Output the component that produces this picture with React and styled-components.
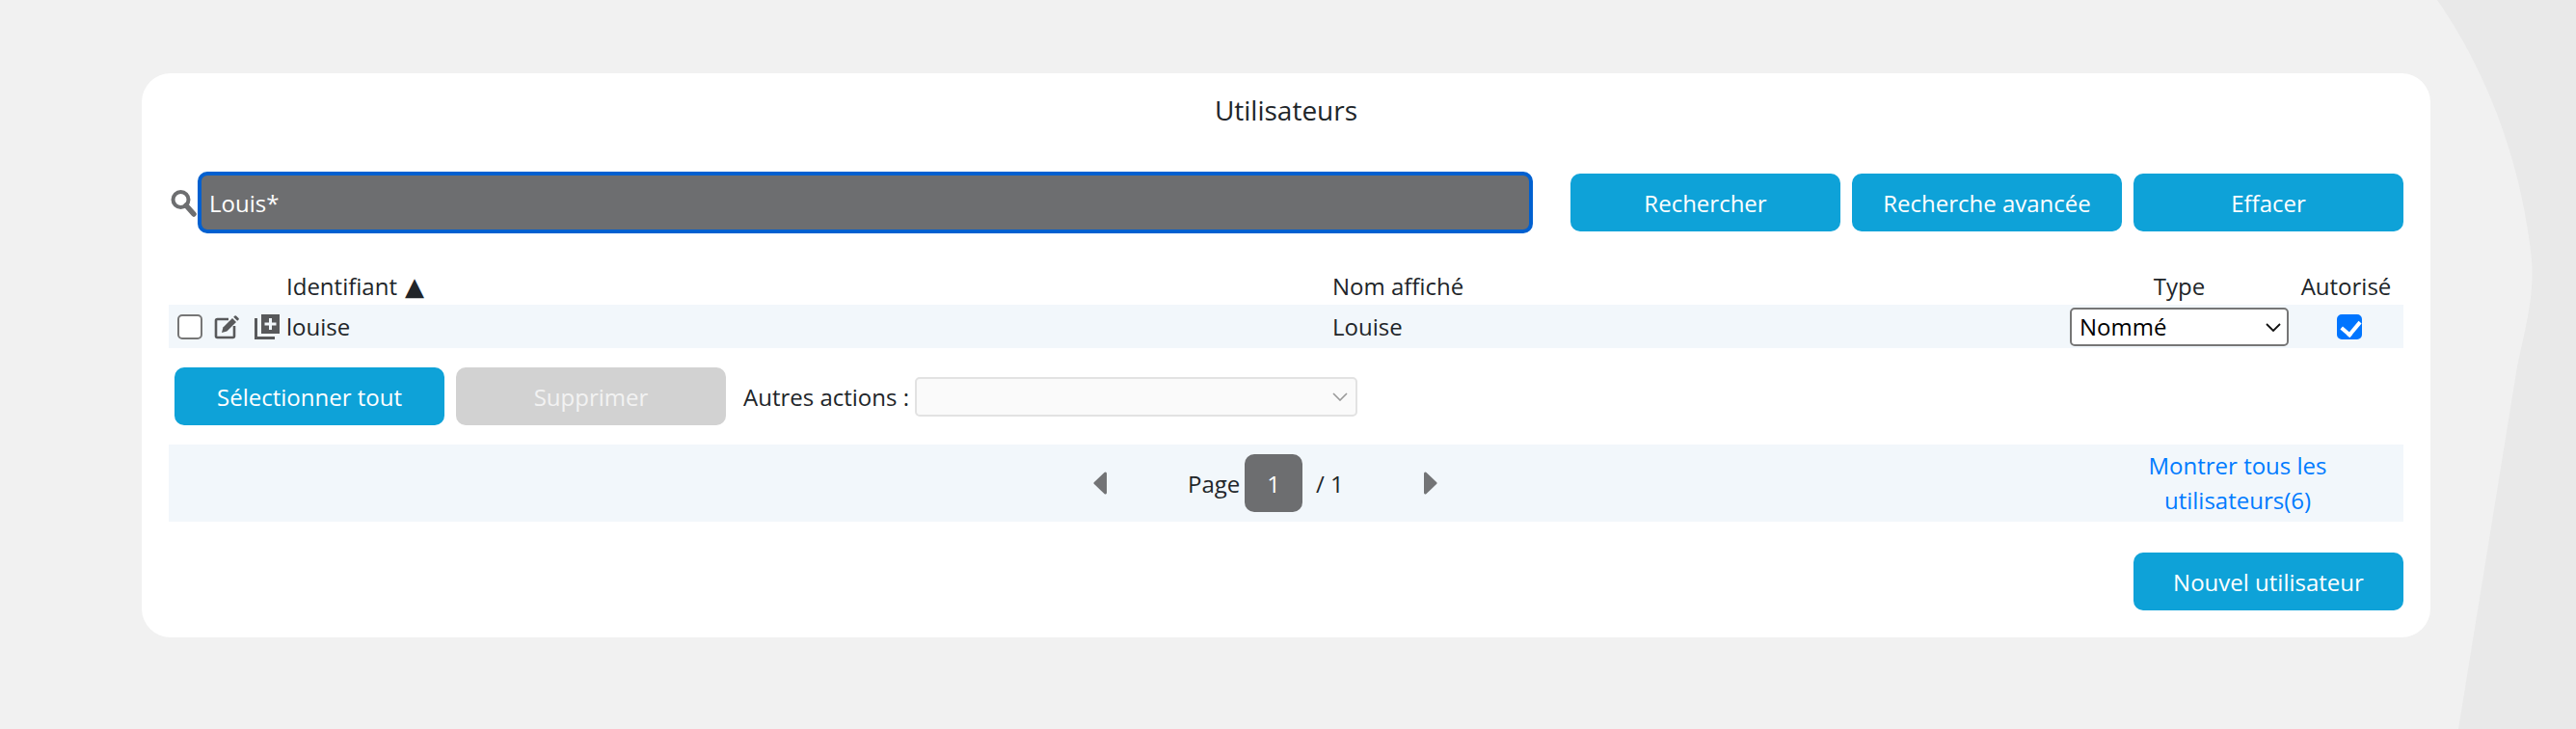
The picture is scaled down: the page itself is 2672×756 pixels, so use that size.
import React from 'react';
import styled, { createGlobalStyle } from 'styled-components';

const GlobalStyle = createGlobalStyle`
  html, body {
    margin: 0;
    padding: 0;
    background: #f1f1f1;
  }
  * {
    box-sizing: border-box;
  }
  body {
    font-family: "Open Sans", "Noto Sans", sans-serif;
    font-size: 24px;
    color: #212529;
  }
`;

const Page = styled.div`
  position: relative;
  width: 2672px;
  height: 756px;
  overflow: hidden;
  padding: 76px 0 0 147px;
  background: #f1f1f1;
`;

const Backdrop = styled.svg`
  position: absolute;
  top: 0;
  left: 0;
`;

const Card = styled.main`
  position: relative;
  width: 2374px;
  height: 585px;
  padding: 0 28px;
  background: #fff;
  border-radius: 30px;
`;

const Title = styled.h1`
  margin: 0 0 26px;
  font-size: 28px;
  font-weight: 400;
  line-height: 76px;
  text-align: center;
`;

const SearchRow = styled.form`
  display: flex;
  align-items: center;
  height: 64px;
  margin: 0;
`;

const SearchIcon = styled.svg`
  flex: none;
  width: 30px;
  height: 30px;
  filter: blur(0.5px);
`;

const SearchInput = styled.input`
  flex: none;
  width: 1385px;
  height: 64px;
  padding: 0 8px;
  border: 4px solid #0060d0;
  border-radius: 10px;
  outline: none;
  background: #6d6e70;
  color: #fff;
  font: inherit;
`;

const SearchButtons = styled.div`
  display: flex;
  gap: 12px;
  margin-left: 39px;
`;

const Button = styled.button`
  flex: none;
  width: 280px;
  height: 60px;
  padding: 0;
  border: 0;
  border-radius: 10px;
  background: ${(p) => (p.disabled ? '#d2d2d2' : '#0ea2d8')};
  color: ${(p) => (p.disabled ? '#f2f2f2' : '#fff')};
  font: inherit;
  font-weight: 500;
`;

const Columns = styled.div`
  display: grid;
  grid-template-columns: 122px 1085px 765px 227px 119px;
  align-items: center;
`;

const HeaderRow = styled(Columns)`
  height: 36px;
  margin: 36px 0 2px;
`;

const HeaderCell = styled.div`
  grid-column: ${(p) => p.$col};
  text-align: ${(p) => (p.$center ? 'center' : 'left')};
  white-space: nowrap;
`;

const SortMark = styled.span`
  margin-left: 8px;
  font-family: "DejaVu Sans", sans-serif;
  font-size: 26px;
  line-height: 1;
`;

const DataRow = styled(Columns)`
  height: 45px;
  background: #f2f7fb;
`;

const RowTools = styled.div`
  display: flex;
  align-items: center;
  padding-left: 9px;
`;

const Check = styled.input`
  appearance: none;
  position: relative;
  flex: none;
  width: 26px;
  height: 26px;
  margin: 0;
  border: 2px solid #767676;
  border-radius: 5px;
  background: #fff;

  &:checked {
    border-color: #0075ff;
    background: #0075ff;
  }

  &:checked::after {
    content: '';
    position: absolute;
    top: 1px;
    left: 6px;
    width: 9px;
    height: 15px;
    border: solid #fff;
    border-width: 0 4px 4px 0;
    transform: rotate(40deg);
  }
`;

const EditIcon = styled.svg`
  flex: none;
  width: 26px;
  height: 26px;
  margin-left: 12px;
`;

const AddIcon = styled.svg`
  flex: none;
  width: 26px;
  height: 26px;
  margin-left: 16px;
`;

const Centered = styled.div`
  display: flex;
  justify-content: center;
  padding-left: 6px;
`;

const SelectWrap = styled.div`
  position: relative;
  width: ${(p) => p.$width}px;
  height: ${(p) => p.$height}px;
`;

const Select = styled.select`
  appearance: none;
  display: block;
  width: 100%;
  height: 100%;
  padding: 0 0 0 8px;
  border: 2px solid #767676;
  border-radius: 5px;
  background: #fff;
  color: #000;
  font: inherit;
`;

const MutedSelect = styled(Select)`
  border-color: #e2e2e2;
  background: #fafafa;
`;

const Chevron = styled.svg`
  position: absolute;
  top: 50%;
  right: ${(p) => p.$right}px;
  width: 16px;
  height: 9px;
  margin-top: -4px;
  pointer-events: none;
`;

const ActionsRow = styled.div`
  display: flex;
  align-items: center;
  gap: 12px;
  height: 60px;
  margin-top: 20px;
  padding-left: 6px;
`;

const ActionLabel = styled.label`
  width: 170px;
  margin-left: 6px;
  margin-right: -4px;
  white-space: nowrap;
`;

const Pager = styled.nav`
  display: flex;
  align-items: center;
  height: 80px;
  margin-top: 20px;
  padding-left: 959px;
  background: #f2f7fb;
`;

const Arrow = styled.svg`
  flex: none;
  width: 14px;
  height: 24px;
`;

const PageWord = styled.span`
  width: 59px;
  margin-left: 84px;
`;

const PageBox = styled.span`
  display: flex;
  flex: none;
  align-items: center;
  justify-content: center;
  width: 60px;
  height: 60px;
  border-radius: 10px;
  background: #6d6e70;
  color: #fff;
`;

const PageTotal = styled.span`
  width: 126px;
  padding-left: 14px;
`;

const ShowAll = styled.a`
  width: 300px;
  margin-left: 680px;
  color: #007bff;
  line-height: 36px;
  text-align: center;
  text-decoration: none;
`;

const FooterRow = styled.div`
  display: flex;
  justify-content: flex-end;
  margin-top: 32px;
`;

export default function App() {
  return (
    <>
      <GlobalStyle />
      <Page>
        <Backdrop width="2672" height="756" viewBox="0 0 2672 756">
          <path
            d="M2528 0 C2570 60 2612 150 2625 260 C2630 300 2622 330 2611 380 L2550 756 L2672 756 L2672 0 Z"
            fill="#e9e9e9"
          />
        </Backdrop>
        <Card>
          <Title>Utilisateurs</Title>
          <SearchRow onSubmit={(e) => e.preventDefault()}>
            <SearchIcon viewBox="0 0 30 30">
              <circle cx="12.5" cy="12" r="8" fill="none" stroke="#6d6e70" strokeWidth="4" />
              <line x1="18" y1="18" x2="26" y2="27" stroke="#6d6e70" strokeWidth="5.5" strokeLinecap="round" />
            </SearchIcon>
            <SearchInput defaultValue="Louis*" />
            <SearchButtons>
              <Button type="button">Rechercher</Button>
              <Button type="button">Recherche avancée</Button>
              <Button type="button">Effacer</Button>
            </SearchButtons>
          </SearchRow>

          <HeaderRow>
            <HeaderCell $col={2}>
              Identifiant<SortMark>▲</SortMark>
            </HeaderCell>
            <HeaderCell $col={3}>Nom affiché</HeaderCell>
            <HeaderCell $col={4} $center>Type</HeaderCell>
            <HeaderCell $col={5} $center>Autorisé</HeaderCell>
          </HeaderRow>

          <DataRow>
            <RowTools>
              <Check type="checkbox" />
              <EditIcon viewBox="0 0 26 26">
                <path
                  d="M15 5H3.5A1.5 1.5 0 0 0 2 6.5v16A1.5 1.5 0 0 0 3.5 24h16a1.5 1.5 0 0 0 1.5-1.5V12"
                  fill="none"
                  stroke="#58595b"
                  strokeWidth="2.6"
                />
                <path d="M8 19l1.4-5.4L19 4l4 4-9.6 9.6z" fill="#58595b" />
                <path d="M20.2 2.8l1.3-1.3a1 1 0 0 1 1.4 0l2.6 2.6a1 1 0 0 1 0 1.4l-1.3 1.3z" fill="#58595b" />
              </EditIcon>
              <AddIcon viewBox="0 0 26 26">
                <path d="M0 4h3v19h18v3H0z" fill="#58595b" />
                <path d="M7 0h19v20H7zM15 4v4.5h-4.5v3H15V16h3v-4.5h4.5v-3H18V4z" fill="#58595b" fillRule="evenodd" />
              </AddIcon>
            </RowTools>
            <div>louise</div>
            <div>Louise</div>
            <SelectWrap $width={227} $height={40}>
              <Select defaultValue="Nommé">
                <option>Nommé</option>
              </Select>
              <Chevron $right={8} viewBox="0 0 16 9">
                <path d="M1 1l7 7 7-7" fill="none" stroke="#111" strokeWidth="1.8" />
              </Chevron>
            </SelectWrap>
            <Centered>
              <Check type="checkbox" defaultChecked />
            </Centered>
          </DataRow>

          <ActionsRow>
            <Button type="button">Sélectionner tout</Button>
            <Button type="button" disabled>Supprimer</Button>
            <ActionLabel>Autres actions :</ActionLabel>
            <SelectWrap $width={459} $height={41}>
              <MutedSelect />
              <Chevron $right={10} viewBox="0 0 16 9">
                <path d="M1 1l7 7 7-7" fill="none" stroke="#999" strokeWidth="1.6" />
              </Chevron>
            </SelectWrap>
          </ActionsRow>

          <Pager>
            <Arrow viewBox="0 0 14 24">
              <path d="M12.5 2L2 12l10.5 10z" fill="#737476" stroke="#737476" strokeWidth="3" strokeLinejoin="round" />
            </Arrow>
            <PageWord>Page</PageWord>
            <PageBox>1</PageBox>
            <PageTotal>/ 1</PageTotal>
            <Arrow viewBox="0 0 14 24">
              <path d="M1.5 2L12 12 1.5 22z" fill="#737476" stroke="#737476" strokeWidth="3" strokeLinejoin="round" />
            </Arrow>
            <ShowAll href="#">Montrer tous les utilisateurs(6)</ShowAll>
          </Pager>

          <FooterRow>
            <Button type="button">Nouvel utilisateur</Button>
          </FooterRow>
        </Card>
      </Page>
    </>
  );
}
